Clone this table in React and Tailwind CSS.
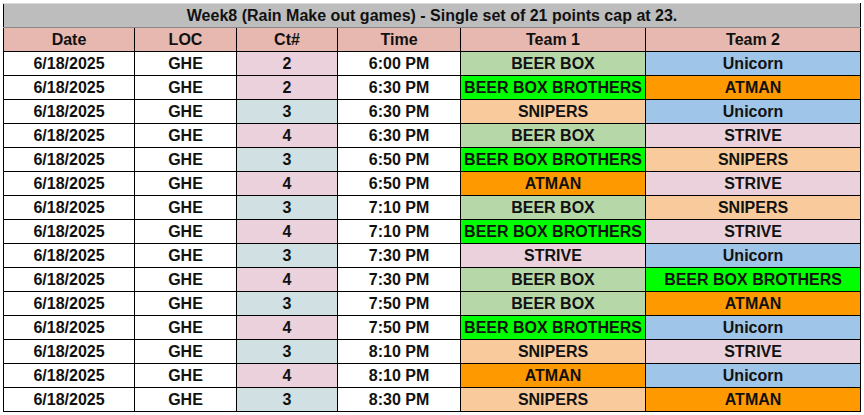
const TEAM_COLORS = {
  'BEER BOX': 'bg-[#b6d7a8]',
  'BEER BOX BROTHERS': 'bg-[#00ff00]',
  ATMAN: 'bg-[#ff9900]',
  SNIPERS: 'bg-[#f9cb9c]',
  Unicorn: 'bg-[#9fc5e8]',
  STRIVE: 'bg-[#ead1dc]',
};

const COURT_COLORS = {
  2: 'bg-[#ead1dc]',
  3: 'bg-[#d0e0e3]',
  4: 'bg-[#ead1dc]',
};

const games = [
  [2, '6:00 PM', 'BEER BOX', 'Unicorn'],
  [2, '6:30 PM', 'BEER BOX BROTHERS', 'ATMAN'],
  [3, '6:30 PM', 'SNIPERS', 'Unicorn'],
  [4, '6:30 PM', 'BEER BOX', 'STRIVE'],
  [3, '6:50 PM', 'BEER BOX BROTHERS', 'SNIPERS'],
  [4, '6:50 PM', 'ATMAN', 'STRIVE'],
  [3, '7:10 PM', 'BEER BOX', 'SNIPERS'],
  [4, '7:10 PM', 'BEER BOX BROTHERS', 'STRIVE'],
  [3, '7:30 PM', 'STRIVE', 'Unicorn'],
  [4, '7:30 PM', 'BEER BOX', 'BEER BOX BROTHERS'],
  [3, '7:50 PM', 'BEER BOX', 'ATMAN'],
  [4, '7:50 PM', 'BEER BOX BROTHERS', 'Unicorn'],
  [3, '8:10 PM', 'SNIPERS', 'STRIVE'],
  [4, '8:10 PM', 'ATMAN', 'Unicorn'],
  [3, '8:30 PM', 'SNIPERS', 'ATMAN'],
];

const headers = ['Date', 'LOC', 'Ct#', 'Time', 'Team 1', 'Team 2'];

export default function App() {
  const cell = 'border border-black p-0 text-center align-middle';

  return (
    <div
      className="w-[864px] h-[415px] bg-white pt-[3px] pl-[3px] text-[16px] font-bold leading-none text-[#111]"
      style={{ fontFamily: '"Liberation Sans", Arial, sans-serif' }}
    >
      <table className="table-fixed w-[857px]">
        <colgroup>
          <col className="w-[131px]" />
          <col className="w-[102px]" />
          <col className="w-[101px]" />
          <col className="w-[123px]" />
          <col className="w-[185px]" />
          <col className="w-[215px]" />
        </colgroup>
        <tbody>
          {/* Title row */}
          <tr className="h-[24px]">
            <td
              colSpan={6}
              className="border-x border-x-black border-t border-t-[#d9d9d9] border-b border-b-[#8a8a8a] bg-[#bdbdbd] p-0 text-center"
            >
              Week8 (Rain Make out games) - Single set of 21 points cap at 23.
            </td>
          </tr>

          {/* Header row */}
          <tr className="h-[24px] bg-[#e6b8af]">
            {headers.map((h) => (
              <td key={h} className={cell}>
                {h}
              </td>
            ))}
          </tr>

          {/* Game rows */}
          {games.map(([court, time, team1, team2], i) => (
            <tr key={i} className="h-[24px]">
              <td className={cell}>6/18/2025</td>
              <td className={cell}>GHE</td>
              <td className={`${cell} ${COURT_COLORS[court]}`}>{court}</td>
              <td className={cell}>{time}</td>
              <td className={`${cell} ${TEAM_COLORS[team1]}`}>{team1}</td>
              <td className={`${cell} ${TEAM_COLORS[team2]}`}>{team2}</td>
            </tr>
          ))}
        </tbody>
      </table>
    </div>
  );
}
